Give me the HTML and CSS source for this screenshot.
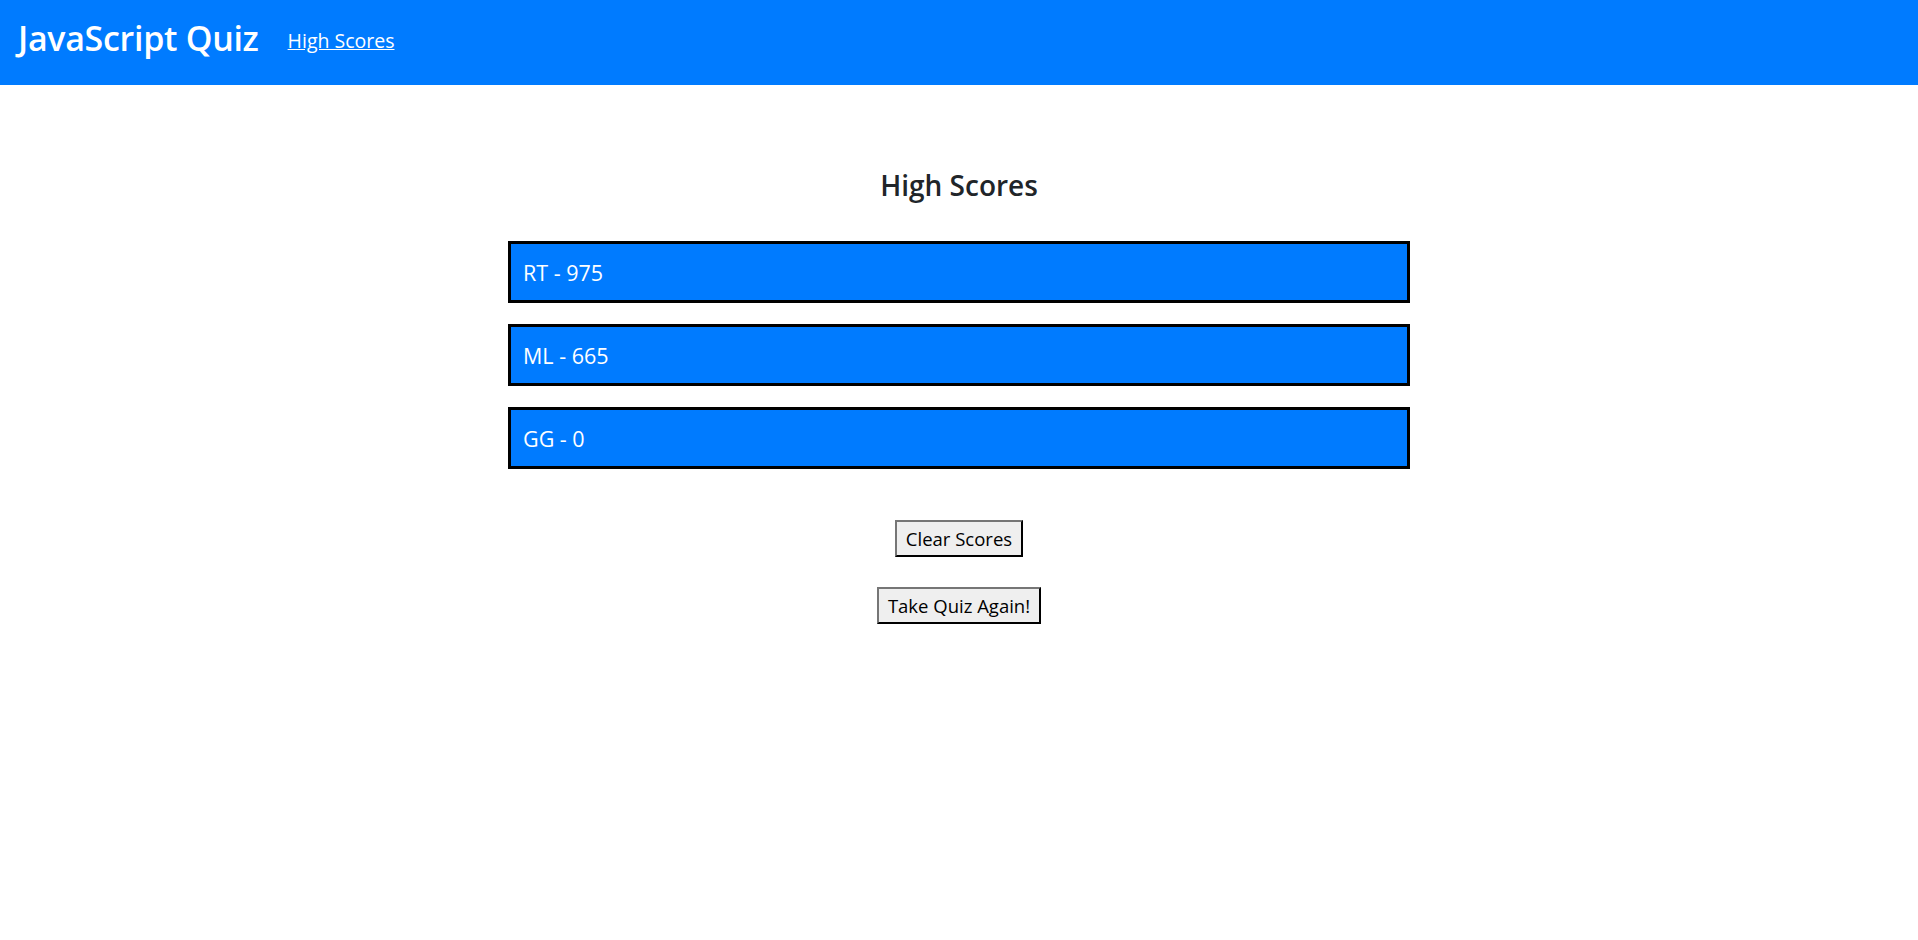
FILE: index.html
```html
<!DOCTYPE html>
<html lang="en">
<head>
<meta charset="utf-8">
<title>JavaScript Quiz - High Scores</title>
<link rel="stylesheet" href="styles.css">
</head>
<body>
<header class="navbar">
  <span class="brand">JavaScript Quiz</span>
  <a class="nav-link" href="#">High Scores</a>
</header>
<main class="content">
  <h2 class="title">High Scores</h2>
  <ul class="scores">
    <li class="score">RT - 975</li>
    <li class="score">ML - 665</li>
    <li class="score">GG - 0</li>
  </ul>
  <div class="actions">
    <button class="btn" type="button">Clear Scores</button>
    <button class="btn" type="button">Take Quiz Again!</button>
  </div>
</main>
</body>
</html>
```
FILE: styles.css
```css
* { box-sizing: border-box; }
html, body { margin: 0; padding: 0; }
body {
  font-family: "Open Sans", "Noto Sans", sans-serif;
  color: #212529;
  background: #fff;
}
.navbar {
  height: 85px;
  background: #007bff;
  display: flex;
  align-items: center;
  padding: 0 18px 10px;
  gap: 29px;
}
.brand {
  color: #fff;
  font-size: 34px;
  font-weight: 600;
  letter-spacing: -0.3px;
}
.nav-link {
  color: #fff;
  font-size: 19.5px;
  text-decoration: underline;
  padding-top: 5px;
}
.content {
  display: flex;
  flex-direction: column;
  align-items: center;
  padding-top: 83px;
}
.title {
  margin: 0;
  font-size: 28px;
  line-height: 34px;
  font-weight: 600;
}
.scores {
  list-style: none;
  margin: 39px 0 0;
  padding: 0;
  width: 902px;
  display: flex;
  flex-direction: column;
  gap: 21px;
}
.score {
  height: 62px;
  background: #007bff;
  border: 3px solid #000;
  color: #fff;
  font-size: 21.5px;
  display: flex;
  align-items: center;
  padding-left: 12px;
}
.actions {
  margin-top: 51px;
  display: flex;
  flex-direction: column;
  align-items: center;
  gap: 30px;
}
.btn {
  font-family: inherit;
  font-size: 18.5px;
  color: #000;
  background: #efefef;
  border: 2px outset #767676;
  border-color: #767676 #222 #222 #767676;
  padding: 0 9px;
  height: 37px;
}
```
